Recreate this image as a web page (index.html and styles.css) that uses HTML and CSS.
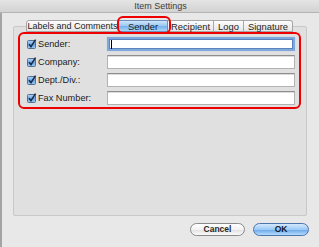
FILE: index.html
```html
<!DOCTYPE html>
<html>
<head>
<meta charset="utf-8">
<link rel="stylesheet" href="styles.css">
</head>
<body>
<div class="window">
  <div class="titlebar">Item Settings</div>
  <div class="tabs">
    <div class="tab tab-first">Labels and Comments</div>
    <div class="tab tab-sel">Sender</div>
    <div class="tab">Recipient</div>
    <div class="tab">Logo</div>
    <div class="tab tab-last">Signature</div>
  </div>
  <div class="panel">
    <div class="row">
      <div class="lab"><svg class="cb" viewBox="0 0 10 10" width="10" height="10"><defs><linearGradient id="g1" x1="0" y1="0" x2="0" y2="1"><stop offset="0" stop-color="#b6d6f6"/><stop offset="0.5" stop-color="#6aa6e6"/><stop offset="1" stop-color="#9ccaf4"/></linearGradient></defs><rect x="0.5" y="1.5" width="8" height="8" rx="1" fill="url(#g1)" stroke="#56708e"/><path d="M2 5.2 L4 7.6 L8.6 0.6" fill="none" stroke="#1c2c48" stroke-width="1.6"/></svg><span>Sender:</span></div>
      <div class="field focus"></div>
    </div>
    <div class="row">
      <div class="lab"><svg class="cb" viewBox="0 0 10 10" width="10" height="10"><rect x="0.5" y="1.5" width="8" height="8" rx="1" fill="url(#g1)" stroke="#56708e"/><path d="M2 5.2 L4 7.6 L8.6 0.6" fill="none" stroke="#1c2c48" stroke-width="1.6"/></svg><span>Company:</span></div>
      <div class="field"></div>
    </div>
    <div class="row">
      <div class="lab"><svg class="cb" viewBox="0 0 10 10" width="10" height="10"><rect x="0.5" y="1.5" width="8" height="8" rx="1" fill="url(#g1)" stroke="#56708e"/><path d="M2 5.2 L4 7.6 L8.6 0.6" fill="none" stroke="#1c2c48" stroke-width="1.6"/></svg><span>Dept./Div.:</span></div>
      <div class="field"></div>
    </div>
    <div class="row">
      <div class="lab"><svg class="cb" viewBox="0 0 10 10" width="10" height="10"><rect x="0.5" y="1.5" width="8" height="8" rx="1" fill="url(#g1)" stroke="#56708e"/><path d="M2 5.2 L4 7.6 L8.6 0.6" fill="none" stroke="#1c2c48" stroke-width="1.6"/></svg><span>Fax Number:</span></div>
      <div class="field"></div>
    </div>
  </div>
  <div class="buttons">
    <div class="btn">Cancel</div>
    <div class="btn btn-ok">OK</div>
  </div>
  <div class="mark mark-tab"></div>
  <div class="mark mark-fields"></div>
</div>
</body>
</html>
```

FILE: styles.css
```css
html, body {
  margin: 0;
  padding: 0;
}
body {
  width: 319px;
  height: 247px;
  overflow: hidden;
  font-family: "Liberation Sans", Arial, sans-serif;
  color: #1a1a1a;
}
.window {
  position: relative;
  width: 319px;
  height: 247px;
  box-sizing: border-box;
  background: #e8e8e8;
  border-left: 2px solid #a4a4a4;
  display: flex;
  flex-direction: column;
}
.titlebar {
  height: 12px;
  line-height: 12px;
  margin-left: -2px;
  padding-left: 2px;
  text-align: center;
  font-size: 9px;
  color: #3c3c3c;
  background: linear-gradient(#e4e4e4, #d2d2d2);
  border-bottom: 1px solid #b4b4b4;
}
.tabs {
  display: flex;
  margin: 7px 0 -6px 24px;
  height: 12px;
  position: relative;
  z-index: 1;
}
.tab {
  box-sizing: border-box;
  height: 12px;
  line-height: 11px;
  font-size: 9.4px;
  text-align: center;
  background: linear-gradient(#fdfdfd, #f0f0f0 55%, #e6e6e6);
  border: 1px solid #a6a6a6;
  border-left: none;
  color: #1e1e1e;
  white-space: nowrap;
}
.tab-first {
  width: 93px;
  font-size: 9px;
  border-left: 1px solid #a6a6a6;
  border-top-left-radius: 3px;
}
.tab-sel {
  width: 49px;
  background: linear-gradient(#cfe5fb, #98c8f5 50%, #78b4ee 55%, #a9d4fa);
  border-color: #6f8fb8;
}
.tab:nth-child(3) { width: 46px; }
.tab:nth-child(4) { width: 30px; }
.tab-last {
  width: 49px;
  border-top-right-radius: 3px;
}
.panel {
  margin: 0 12px 0 11px;
  height: 190px;
  box-sizing: border-box;
  background: #e0e0e0;
  border: 1px solid #c8c8c8;
  border-radius: 2px;
  padding: 10px 0 0 13px;
  display: flex;
  flex-direction: column;
  gap: 4px;
}
.row {
  display: flex;
  align-items: center;
  height: 14px;
}
.lab {
  width: 80px;
  display: flex;
  align-items: center;
  gap: 1px;
  font-size: 9.2px;
  color: #1a1a1a;
}
.cb {
  display: block;
  flex: none;
}
.field {
  width: 188px;
  height: 14px;
  box-sizing: border-box;
  background: #ffffff;
  border: 1px solid #b2b2b2;
  border-top-color: #8e8e8e;
  box-shadow: inset 0 1px 0 #dcdcdc;
}
.field.focus {
  border: 2px solid #80a8dc;
  box-shadow: 0 0 1px #a8c8ee, inset 0 0 0 1px #5c84bc;
  position: relative;
}
.field.focus::after {
  content: "";
  position: absolute;
  left: 2px;
  top: 1px;
  width: 1px;
  height: 9px;
  background: #000;
}
.buttons {
  display: flex;
  justify-content: flex-end;
  gap: 8px;
  margin: 7px 10px 0 0;
}
.btn {
  box-sizing: border-box;
  height: 13px;
  width: 55px;
  border-radius: 7px;
  border: 1px solid #8a8a8a;
  background: linear-gradient(#ffffff, #f2f2f2 50%, #e2e2e2 55%, #fbfbfb);
  font-size: 8.5px;
  font-weight: bold;
  color: #2a2a2a;
  text-align: center;
  line-height: 11px;
}
.btn-ok {
  width: 56px;
  border-color: #4d74aa;
  background: linear-gradient(#d4e8fc, #9ccaf6 50%, #6eaaea 55%, #b6dcfc);
  color: #101828;
}
.mark {
  position: absolute;
  box-sizing: border-box;
  border: 2px solid #ee0000;
  border-radius: 6px;
  z-index: 2;
}
.mark-tab {
  left: 115px;
  top: 16px;
  width: 54px;
  height: 18px;
}
.mark-fields {
  left: 16px;
  top: 32px;
  width: 283px;
  height: 77px;
}
```
